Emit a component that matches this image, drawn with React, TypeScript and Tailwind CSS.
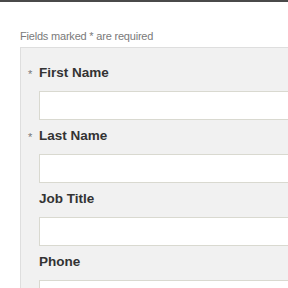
const fields = [
  { label: 'First Name', required: true },
  { label: 'Last Name', required: true },
  { label: 'Job Title', required: false },
  { label: 'Phone', required: false },
];

export default function App() {
  return (
    <div className="h-[288px] w-[288px] overflow-hidden bg-white font-['Liberation_Sans',Arial,sans-serif]">
      <div className="h-[2px] bg-[#4a4a4a]" />
      <div className="pl-5 pt-[27px]">
        <p className="text-[11px] leading-[14px] tracking-[-0.2px] text-[#7a7a7a]">Fields marked * are required</p>
        <div className="mt-[4px] w-[300px] border-t border-l border-[#dedede] bg-[#f1f1f1] pl-[7px] pt-[15px]">
          {fields.map((f) => (
            <div key={f.label} className="mb-[6px]">
              <div className="flex h-[20px] items-center">
                <span className="w-[11px] pt-[2px] text-[11px] text-[#777]">{f.required ? '*' : ''}</span>
                <label className="text-[13.5px] font-bold text-[#333]">{f.label}</label>
              </div>
              <input
                type="text"
                className="mt-[8px] ml-[11px] block h-[29px] w-[280px] border border-[#d9d9d0] bg-white outline-none"
              />
            </div>
          ))}
        </div>
      </div>
    </div>
  );
}
